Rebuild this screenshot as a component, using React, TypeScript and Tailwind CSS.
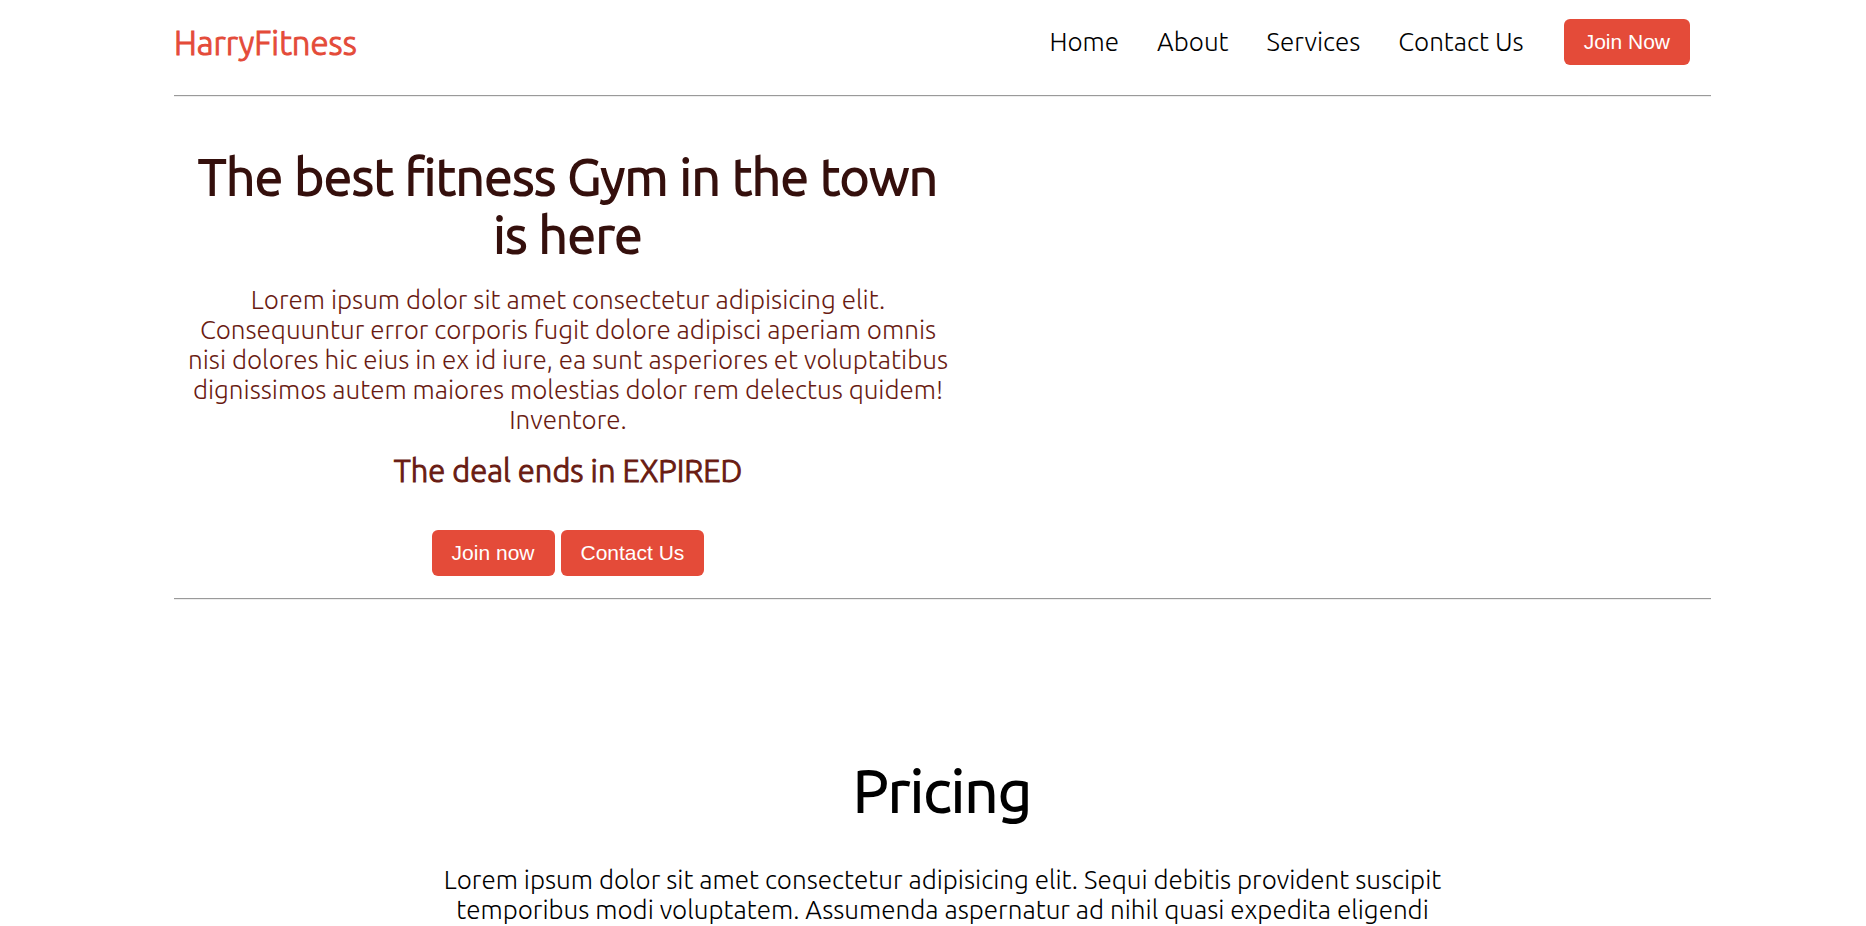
const navLinks = [
  { label: "Home", href: "#home" },
  { label: "About", href: "#about" },
  { label: "Services", href: "#services" },
  { label: "Contact Us", href: "#contact" },
];

function Button({ children }: { children: string }) {
  return (
    <button
      type="button"
      className="h-[46px] cursor-pointer rounded-md bg-[#e44b39] px-5 font-['Liberation_Sans',Arial,sans-serif] text-[21px] leading-6 whitespace-nowrap text-white hover:bg-[#c93d2c]"
    >
      {children}
    </button>
  );
}

function Divider() {
  return <hr className="h-0.5 border-t border-b border-t-[#9a9a9a] border-b-[#eeeeee]" />;
}

export default function App() {
  return (
    <div className="bg-white pr-[155px] pl-[174px] font-['Ubuntu','Open_Sans',sans-serif] font-light text-black">
      <header className="flex h-[95px] items-start justify-between pt-[19px]">
        <a href="#home" className="text-[33px] leading-[48px] text-[#e44b39] [-webkit-text-stroke:1px]">
          HarryFitness
        </a>
        <nav className="flex items-center pr-[21px]">
          <ul className="mr-10 flex gap-[38px] text-[26px] leading-[46px]">
            {navLinks.map((link) => (
              <li key={link.label}>
                <a href={link.href}>{link.label}</a>
              </li>
            ))}
          </ul>
          <Button>Join Now</Button>
        </nav>
      </header>
      <Divider />
      <main>
        <section className="grid grid-cols-[788fr_749fr] pb-[22px]">
          <div className="flex flex-col items-center pt-[50px] text-center whitespace-nowrap">
            <h1 className="text-[51px] leading-[58px] text-[#35100d] [-webkit-text-stroke:2px]">
              The best fitness Gym in the town
              <br />
              is here
            </h1>
            <p className="mt-[22px] text-[26px] leading-[30px] text-[#691b12]">
              Lorem ipsum dolor sit amet consectetur adipisicing elit.
              <br />
              Consequuntur error corporis fugit dolore adipisci aperiam omnis
              <br />
              nisi dolores hic eius in ex id iure, ea sunt asperiores et voluptatibus
              <br />
              dignissimos autem maiores molestias dolor rem delectus quidem!
              <br />
              Inventore.
            </p>
            <h2 className="mt-[18px] text-[31px] leading-9 text-[#691b12] [-webkit-text-stroke:1px]">
              The deal ends in EXPIRED
            </h2>
            <div className="mt-[41px] flex gap-1.5">
              <Button>Join now</Button>
              <Button>Contact Us</Button>
            </div>
          </div>
        </section>
        <Divider />
        <section className="pt-[155px] text-center">
          <h2 className="text-[59px] leading-[70px] [-webkit-text-stroke:2px]">Pricing</h2>
          <p className="mt-10 text-[26px] leading-[30px] whitespace-nowrap">
            Lorem ipsum dolor sit amet consectetur adipisicing elit. Sequi debitis provident suscipit
            <br />
            temporibus modi voluptatem. Assumenda aspernatur ad nihil quasi expedita eligendi
          </p>
        </section>
      </main>
    </div>
  );
}
